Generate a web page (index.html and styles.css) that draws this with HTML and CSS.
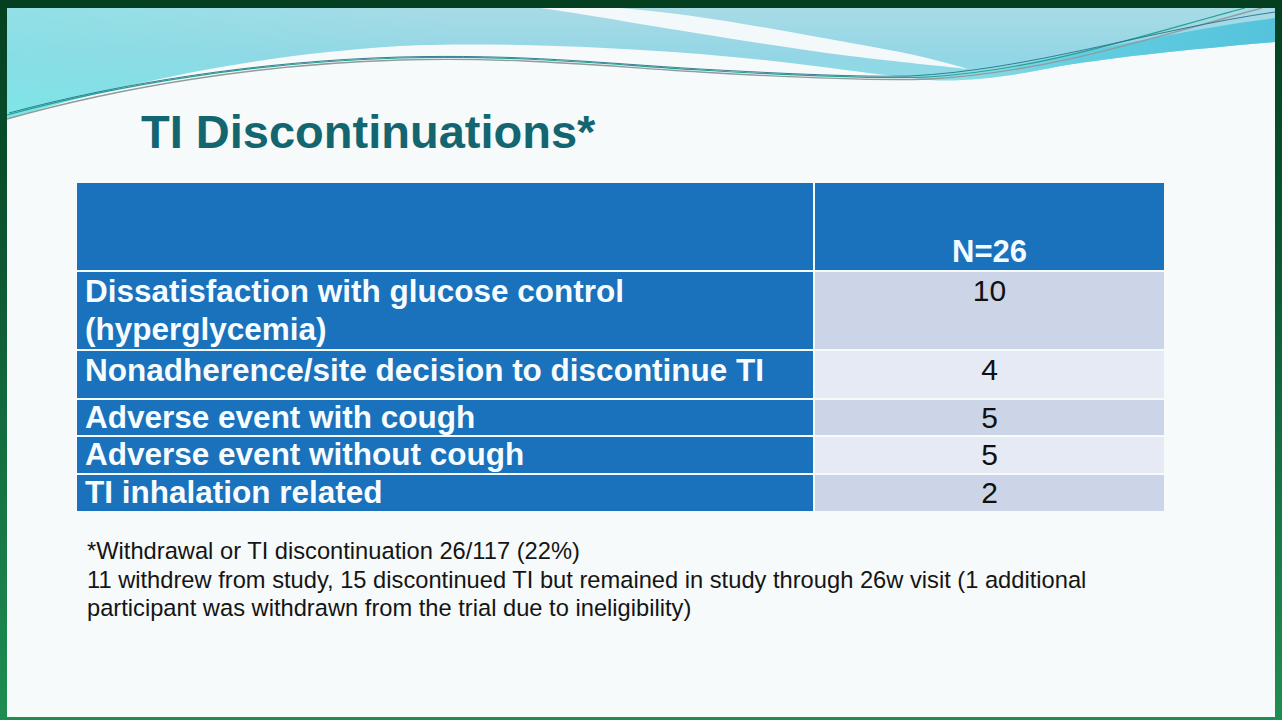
FILE: index.html
```html
<!DOCTYPE html>
<html lang="en">
<head>
<meta charset="utf-8">
<title>TI Discontinuations</title>
<link rel="stylesheet" href="styles.css">
</head>
<body>
<div class="slide">
  <svg class="deco" width="1268" height="140" viewBox="7 8 1268 140" aria-hidden="true">
    <defs>
      <linearGradient id="cy" gradientUnits="userSpaceOnUse" x1="0" y1="8" x2="0" y2="118">
        <stop offset="0" stop-color="#a8dbe6"/>
        <stop offset="0.45" stop-color="#93d6e5"/>
        <stop offset="1" stop-color="#7ee6e7"/>
      </linearGradient>
      <linearGradient id="cyh" gradientUnits="userSpaceOnUse" x1="7" y1="0" x2="1275" y2="0">
        <stop offset="0" stop-color="#7fe4e6" stop-opacity="0.55"/>
        <stop offset="0.35" stop-color="#7fe4e6" stop-opacity="0"/>
        <stop offset="1" stop-color="#7fe4e6" stop-opacity="0"/>
      </linearGradient>
      <linearGradient id="band" gradientUnits="userSpaceOnUse" x1="950" y1="0" x2="1275" y2="0">
        <stop offset="0" stop-color="#6fd7e2" stop-opacity="0"/>
        <stop offset="0.4" stop-color="#62cde0"/>
        <stop offset="1" stop-color="#55c3dc"/>
      </linearGradient>
    </defs>
    <path d="M7,8 H1275 V42 C1160,52 1090,60 1040,70 C1000,78 960,82 930,80 C880,76 800,62 700,54 C600,46 480,42 400,46 C250,55 120,84 7,119 Z" fill="url(#cy)"/>
    <path d="M7,8 H1275 V42 C1160,52 1090,60 1040,70 C1000,78 960,82 930,80 C880,76 800,62 700,54 C600,46 480,42 400,46 C250,55 120,84 7,119 Z" fill="url(#cyh)"/>
    <path d="M940,78 C1040,64 1150,34 1275,18 V42 C1160,52 1090,60 1040,70 C1000,78 960,82 940,78 Z" fill="url(#band)"/>
    <path d="M540,8 L620,8 C700,14 800,34 900,52 C930,58 950,64 968,69 C940,66 900,62 850,56 C760,44 690,32 640,24 C600,17 570,12 540,8 Z" fill="#f3f9fa"/>
    <path d="M7,119 C120,87 260,64 400,60 C520,57 600,66 700,72 C800,78 880,81 930,79 C1050,72 1150,38 1262,8" fill="none" stroke="#8e9c9e" stroke-width="1.3"/>
    <path d="M7,115 C120,84 260,62 400,58 C520,55 600,64 700,70 C800,76 880,79 928,77 C1040,70 1140,36 1245,8" fill="none" stroke="#22a391" stroke-width="1.2"/>
    <path d="M9,113 C120,83 260,61 400,57 C520,54 600,63 700,69 C790,74 860,77 910,76 C1030,70 1150,30 1275,12" fill="none" stroke="#2a6f8c" stroke-width="0.9"/>
  </svg>

  <h1 class="title">TI Discontinuations*</h1>

  <div class="tbl">
    <div class="cell lab head"></div>
    <div class="cell num head"><span class="hn">N=26</span></div>

    <div class="cell lab tall">Dissatisfaction with glucose control (hyperglycemia)</div>
    <div class="cell num tall odd">10</div>

    <div class="cell lab tall">Nonadherence/site decision to discontinue TI</div>
    <div class="cell num tall even">4</div>

    <div class="cell lab">Adverse event with cough</div>
    <div class="cell num odd">5</div>

    <div class="cell lab">Adverse event without cough</div>
    <div class="cell num even">5</div>

    <div class="cell lab">TI inhalation related</div>
    <div class="cell num odd">2</div>
  </div>

  <div class="note">
    <p>*Withdrawal or TI discontinuation 26/117 (22%)</p>
    <p>11 withdrew from study, 15 discontinued TI but remained in study through 26w visit (1 additional participant was withdrawn from the trial due to ineligibility)</p>
  </div>
</div>
</body>
</html>
```

FILE: styles.css
```css
html, body {
  margin: 0;
  padding: 0;
}

body {
  width: 1282px;
  height: 720px;
  overflow: hidden;
  background: linear-gradient(180deg, #04401f 0%, #0c5632 35%, #187a47 75%, #1f8d52 100%);
  font-family: "Liberation Sans", Arial, sans-serif;
}

.slide {
  position: relative;
  margin: 8px 7px 0 7px;
  width: 1268px;
  height: 709px;
  background: #f6fafa;
  overflow: hidden;
}

.deco {
  position: absolute;
  top: 0;
  left: 0;
  display: block;
}

.title {
  position: relative;
  margin: 0;
  padding: 97px 0 0 134px;
  font-size: 47px;
  line-height: 54px;
  font-weight: bold;
  color: #13666f;
}

.tbl {
  display: grid;
  grid-template-columns: 736px 349px;
  grid-template-rows: 87px 77px 47px 35px 36px 36px;
  gap: 2px;
  margin: 24px 0 0 70px;
  width: 1087px;
}

.cell {
  box-sizing: border-box;
  line-height: 35px;
}

.cell.tall {
  line-height: 38px;
}

.lab {
  background: #1a72bd;
  color: #f7fcff;
  font-weight: bold;
  font-size: 31.5px;
  padding-left: 8px;
}

.num {
  text-align: center;
  font-size: 30px;
  color: #111;
}

.odd {
  background: #ccd5e8;
}

.even {
  background: #e6eaf4;
}

.head {
  background: #1a72bd;
}

.num.head {
  display: flex;
  align-items: flex-end;
  justify-content: center;
}

.hn {
  color: #f2fbff;
  font-weight: bold;
  font-size: 31px;
  line-height: 36px;
}

.note {
  margin: 26px 0 0 80px;
  width: 1050px;
  font-size: 23.7px;
  line-height: 28.5px;
  color: #151515;
}

.note p {
  margin: 0;
}
```
